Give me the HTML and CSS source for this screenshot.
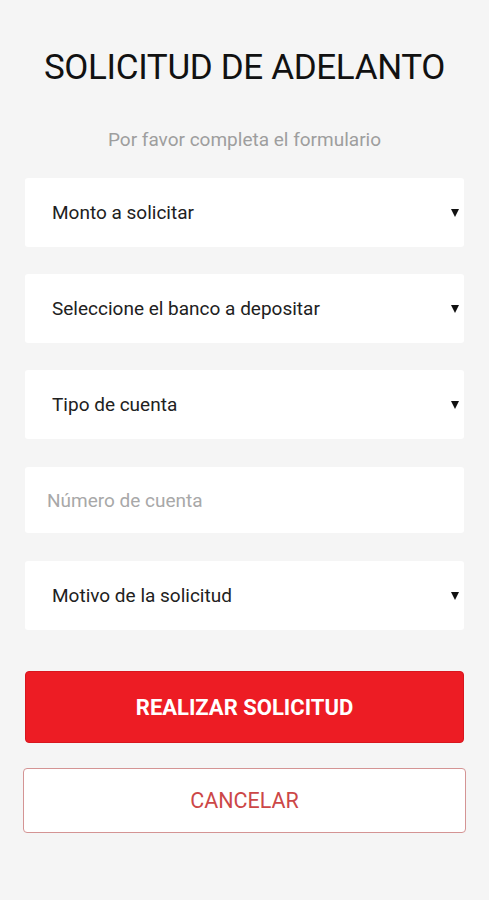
FILE: index.html
```html
<!DOCTYPE html>
<html lang="es">
<head>
<meta charset="utf-8">
<title>Solicitud de adelanto</title>
<link rel="stylesheet" href="styles.css">
</head>
<body>
<main class="page">
  <h1 class="title">SOLICITUD DE ADELANTO</h1>
  <p class="subtitle">Por favor completa el formulario</p>
  <form class="form">
    <div class="field select">
      <span class="label">Monto a solicitar</span>
      <span class="arrow"></span>
    </div>
    <div class="field select">
      <span class="label">Seleccione el banco a depositar</span>
      <span class="arrow"></span>
    </div>
    <div class="field select">
      <span class="label">Tipo de cuenta</span>
      <span class="arrow"></span>
    </div>
    <div class="field input">
      <span class="placeholder">Número de cuenta</span>
    </div>
    <div class="field select">
      <span class="label">Motivo de la solicitud</span>
      <span class="arrow"></span>
    </div>
    <div class="actions">
      <button type="button" class="btn btn-primary">REALIZAR SOLICITUD</button>
      <button type="button" class="btn btn-outline">CANCELAR</button>
    </div>
  </form>
</main>
</body>
</html>
```

FILE: styles.css
```css
* { box-sizing: border-box; }
html, body {
  margin: 0;
  padding: 0;
  background: #f5f5f5;
  font-family: Roboto, "Noto Sans", "Liberation Sans", sans-serif;
}
.page {
  width: 489px;
  min-height: 900px;
  padding-top: 47px;
}
.title {
  margin: 0;
  font-size: 35px;
  line-height: 42px;
  letter-spacing: -0.35px;
  font-weight: 400;
  color: #111;
  text-align: center;
}
.subtitle {
  margin: 40px 0 0;
  font-size: 19px;
  line-height: 22px;
  color: #9e9e9e;
  text-align: center;
}
.form {
  display: flex;
  flex-direction: column;
  gap: 27px;
  margin: 27px 25px 0;
}
.field {
  height: 69px;
  background: #fff;
  border-radius: 3px;
  display: flex;
  align-items: center;
  justify-content: space-between;
  padding: 0 5px 0 27px;
  font-size: 19px;
}
.field.input { padding-left: 22px; height: 66px; margin: 1px 0; }
.label { color: #212121; }
.placeholder { color: #a8a8a8; }
.arrow {
  width: 0;
  height: 0;
  border-left: 4px solid transparent;
  border-right: 4px solid transparent;
  border-top: 8px solid #111;
}
.actions {
  display: flex;
  flex-direction: column;
  gap: 25px;
  margin-top: 14px;
}
.btn {
  font-family: Roboto, "Noto Sans", "Liberation Sans", sans-serif;
  border-radius: 4px;
  cursor: pointer;
  padding: 0;
}
.btn-primary {
  height: 72px;
  background: #ed1c24;
  border: 1px solid #d8161e;
  color: #fff;
  font-size: 22px;
  font-weight: 700;
}
.btn-outline {
  height: 65px;
  margin: 0 -2px;
  background: #fff;
  border: 1.5px solid #d49494;
  color: #cc4747;
  font-size: 21.5px;
  font-weight: 400;
}
```
